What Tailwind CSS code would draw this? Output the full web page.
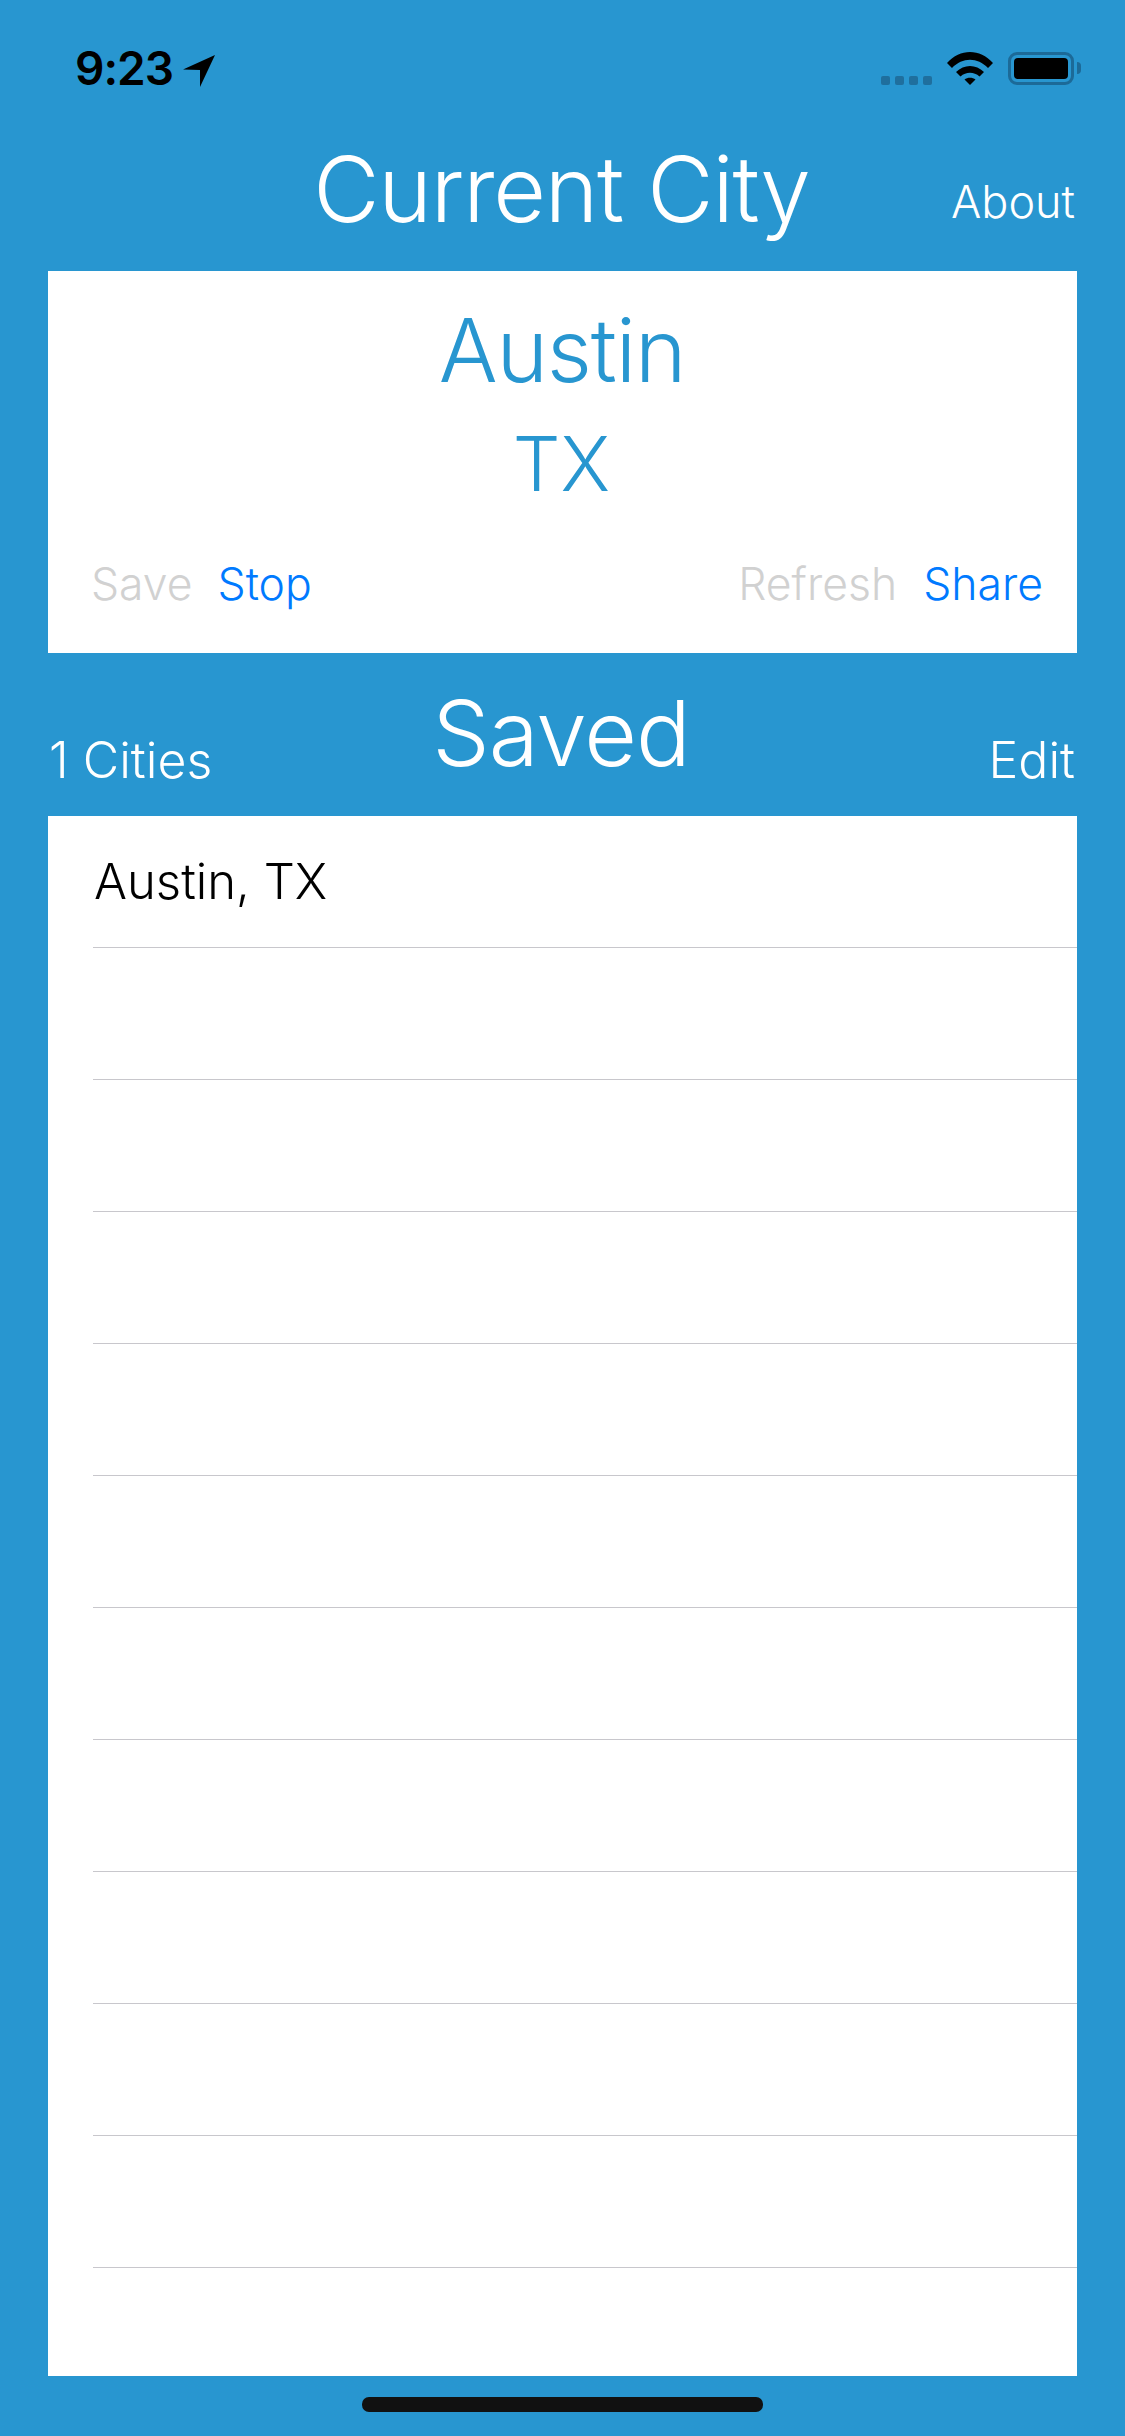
<!DOCTYPE html>
<html lang="en">
<head>
  <meta charset="UTF-8">
  <meta name="viewport" content="width=device-width, initial-scale=1.0">
  <title>Current City</title>
  <script src="https://cdn.jsdelivr.net/npm/@tailwindcss/browser@4"></script>
</head>
<body class="w-[1125px] h-[2436px] overflow-hidden bg-[#2896d0] font-['Inter',sans-serif]">
  <div class="h-[2436px] flex flex-col">
    <!-- status bar -->
    <div class="h-[137px] flex items-start justify-between pt-[45px] pl-[75px] pr-[44px] shrink-0">
      <div class="flex items-center gap-[10px] text-black">
        <span class="text-[46px] leading-[46px] font-semibold tracking-[-1px]">9:23</span>
        <svg class="w-[32px] h-[32px] mt-[6px]" viewBox="0 0 32 32"><path d="M0 14.500 L32 0 L17 32 L17 15 Z" fill="#000"/></svg>
      </div>
      <div class="flex items-start pt-[7px]">
        <div class="flex gap-[5px] mt-[24px] mr-[15px]">
          <span class="w-[9px] h-[9px] rounded-[2px] bg-[#1f6f9e]"></span>
          <span class="w-[9px] h-[9px] rounded-[2px] bg-[#1f6f9e]"></span>
          <span class="w-[9px] h-[9px] rounded-[2px] bg-[#1f6f9e]"></span>
          <span class="w-[9px] h-[9px] rounded-[2px] bg-[#1f6f9e]"></span>
        </div>
        <svg class="w-[46px] h-[33px] mr-[15px]" viewBox="0 0 46 33">
          <path d="M0 11 C13 -3.600 33 -3.600 46 11 L41 16 C30.500 5 15.500 5 5 16 Z" fill="#000"/>
          <path d="M9 20 C17 12 29 12 37 20 L32.500 24.500 C27 19.500 19 19.500 13.500 24.500 Z" fill="#000"/>
          <path d="M17.500 27.500 C20.500 25 25.500 25 28.500 27.500 L23 33 Z" fill="#000"/>
        </svg>
        <div class="w-[66px] h-[33px] rounded-[9px] border-[3px] border-[#1c6a98] p-[3px]">
          <div class="w-full h-full rounded-[4px] bg-black"></div>
        </div>
        <span class="w-[4px] h-[12px] mt-[10px] ml-[3px] rounded-r-[4px] bg-[#1c6a98]"></span>
      </div>
    </div>

    <!-- current city header -->
    <div class="h-[134px] px-[48px] grid grid-cols-[1fr_auto_1fr] items-center text-white shrink-0">
      <span></span>
      <h1 class="pr-[2px] text-[91px] leading-[100px] font-light tracking-[-1.2px] -mt-[30px]">Current City</h1>
      <span class="text-right pr-[2px] text-[45px] leading-[52px] font-light -mt-[4px]">About</span>
    </div>

    <!-- current city card -->
    <div class="mx-[48px] h-[382px] bg-white flex flex-col items-center shrink-0">
      <p class="mt-[29px] mr-[1px] text-[87.500px] leading-[100px] font-light tracking-[-1.2px] text-[#2896d0]">Austin</p>
      <p class="mt-[19px] mr-[2px] text-[75px] leading-[90px] font-light text-[#2896d0]">TX</p>
      <div class="mt-[48px] w-full pl-[43px] pr-[34px] flex justify-between text-[44.500px] leading-[54px] font-[350]">
        <div class="flex gap-[25px]">
          <span class="text-[#d1d1d1]">Save</span>
          <span class="text-[#007aff]">Stop</span>
        </div>
        <div class="flex gap-[26px]">
          <span class="text-[#d1d1d1]">Refresh</span>
          <span class="text-[#007aff]">Share</span>
        </div>
      </div>
    </div>

    <!-- saved header -->
    <div class="h-[163px] px-[48px] grid grid-cols-[1fr_auto_1fr] items-center text-white shrink-0">
      <span class="pl-[1px] text-[50px] leading-[52px] font-light mt-[51px]">1 Cities</span>
      <h2 class="pr-[3px] text-[91px] leading-[100px] font-light tracking-[-1px] -mt-[4px]">Saved</h2>
      <span class="text-right pr-[2px] text-[50px] leading-[52px] font-light mt-[51px]">Edit</span>
    </div>

    <!-- saved list -->
    <div class="mx-[48px] h-[1560px] bg-white flex flex-col shrink-0">
      <div class="h-[132px] ml-[45px] flex items-center border-b border-[#c8c7cc] text-[49px] leading-[60px] text-black font-[350]">
        <span class="ml-[1px]">Austin, TX</span>
      </div>
      <div class="h-[132px] ml-[45px] border-b border-[#c8c7cc]"></div>
      <div class="h-[132px] ml-[45px] border-b border-[#c8c7cc]"></div>
      <div class="h-[132px] ml-[45px] border-b border-[#c8c7cc]"></div>
      <div class="h-[132px] ml-[45px] border-b border-[#c8c7cc]"></div>
      <div class="h-[132px] ml-[45px] border-b border-[#c8c7cc]"></div>
      <div class="h-[132px] ml-[45px] border-b border-[#c8c7cc]"></div>
      <div class="h-[132px] ml-[45px] border-b border-[#c8c7cc]"></div>
      <div class="h-[132px] ml-[45px] border-b border-[#c8c7cc]"></div>
      <div class="h-[132px] ml-[45px] border-b border-[#c8c7cc]"></div>
      <div class="h-[132px] ml-[45px] border-b border-[#c8c7cc]"></div>
    </div>

    <!-- home indicator -->
    <div class="flex justify-center pt-[21px]">
      <div class="w-[401px] h-[15px] rounded-[7px] bg-[#111111]"></div>
    </div>
  </div>
</body>
</html>
